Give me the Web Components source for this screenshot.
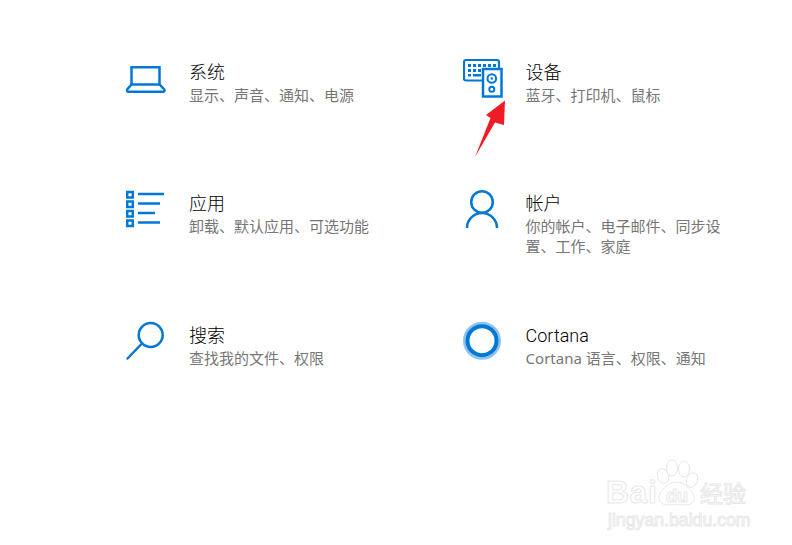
<!DOCTYPE html>
<html lang="zh">
<head>
<meta charset="utf-8">
<title>设置</title>
<style>
html, body { margin: 0; background: #fff; }
body { font-family: "Noto Sans", "Noto Sans CJK SC", sans-serif; }
svg { display: block; }
</style>
</head>
<body>
<settings-page>
  <settings-item>
    <svg slot="icon" width="40" height="40" viewBox="0 0 40 40" fill="none" stroke="#0078d7" stroke-width="2.500"><path d="M5.500 26V9.200h28V26"/><path d="M5.500 26.500h28l4.800 5q.8 2-1 2.200H2.200q-1.800-.2-1-2.200z"/></svg>
    <span slot="name">系统</span>
    <span slot="desc">显示、声音、通知、电源</span>
  </settings-item>
  <settings-item>
    <svg slot="icon" width="40" height="40" viewBox="0 0 40 40" fill="none" stroke="#0078d7" stroke-width="2">
      <path d="M19 22.500H3q-2 0-2-2V4q0-2 2-2h31q2 0 2 2v6" stroke-width="2.200"/>
      <path fill="#0078d7" stroke="none" d="M5 6h3v3H5zM10 6h3v3h-3zM15 6h3v3h-3zM20 6h3v3h-3zM25 6h3v3h-3zM30 6h3v3h-3zM5 11h3v3H5zM10 11h3v3h-3zM15 11h3v3h-3zM5 16h3v2.500H5zM10 16h8v2.500h-8z"/>
      <rect x="20" y="11" width="18.500" height="27.500" fill="#fff" stroke-width="2.500"/>
      <circle cx="28.800" cy="20.500" r="4.300"/><circle cx="28.800" cy="20.500" r="1.200" fill="#0078d7" stroke="none"/>
      <circle cx="28.800" cy="31.200" r="2.500"/>
    </svg>
    <span slot="name">设备</span>
    <span slot="desc">蓝牙、打印机、鼠标</span>
  </settings-item>
  <settings-item>
    <svg slot="icon" width="40" height="40" viewBox="0 0 40 40" fill="none" stroke="#0078d7" stroke-width="2.500"><path d="M1.200 3h5.600v5.500H1.200zM1.200 12.600h5.600v5.500H1.200zM1.200 22h5.600v5.500H1.200zM1.200 31.500h5.600V37H1.200z"/><path d="M12 5h26M12 14.500h22M12 24h17M12 33.500h22"/></svg>
    <span slot="name">应用</span>
    <span slot="desc">卸载、默认应用、可选功能</span>
  </settings-item>
  <settings-item>
    <svg slot="icon" width="40" height="40" viewBox="0 0 40 40" fill="none" stroke="#0078d7" stroke-width="2.500"><circle cx="19" cy="13" r="10.800"/><path d="M4 39a15 15 0 0 1 30 0"/></svg>
    <span slot="name">帐户</span>
    <span slot="desc">你的帐户、电子邮件、同步设置、工作、家庭</span>
  </settings-item>
  <settings-item>
    <svg slot="icon" width="40" height="40" viewBox="0 0 40 40" fill="none" stroke="#0078d7" stroke-width="2.500"><circle cx="24.700" cy="14" r="12"/><path d="M15 23.500L1.500 37.500" stroke-linecap="round"/></svg>
    <span slot="name">搜索</span>
    <span slot="desc">查找我的文件、权限</span>
  </settings-item>
  <settings-item>
    <svg slot="icon" width="40" height="40" viewBox="0 0 40 40" fill="none"><circle cx="19" cy="19.700" r="17.500" stroke="#8fc3ec" stroke-width="3"/><circle cx="19" cy="19.700" r="14.500" stroke="#0078d7" stroke-width="4"/></svg>
    <span slot="name">Cortana</span>
    <span slot="desc">Cortana 语言、权限、通知</span>
  </settings-item>
</settings-page>
<red-arrow></red-arrow>
<jy-watermark></jy-watermark>

<script>
class SettingsPage extends HTMLElement {
  constructor () {
    super()
    this.attachShadow({ mode: 'open' }).innerHTML = `
      <style>
        :host { display: grid; grid-template-columns: 336.6px 270px; grid-template-rows: 131px 132px 100px; padding: 58px 0 0 126px; }
      </style>
      <slot></slot>`
  }
}
customElements.define('settings-page', SettingsPage)

class SettingsItem extends HTMLElement {
  constructor () {
    super()
    this.attachShadow({ mode: 'open' }).innerHTML = `
      <style>
        :host { display: flex; align-items: flex-start; }
        #icon { flex: 0 0 63px; }
        #name { font-family: Roboto, "Noto Sans CJK SC", sans-serif; font-weight: 300; font-size: 18px; line-height: 28px; padding-top: 1px; color: #000; }
        #desc { font-size: 15px; line-height: 20px; margin-top: -2px; color: #767676; width: 200px; }
      </style>
      <div id="icon"><slot name="icon"></slot></div>
      <div>
        <div id="name"><slot name="name"></slot></div>
        <div id="desc"><slot name="desc"></slot></div>
      </div>`
  }
}
customElements.define('settings-item', SettingsItem)

class RedArrow extends HTMLElement {
  constructor () {
    super()
    this.attachShadow({ mode: 'open' }).innerHTML = `
      <style>
        :host { position: absolute; left: 470px; top: 95px; display: block; }
        svg { display: block; }
      </style>
      <svg width="40" height="66" viewBox="470 95 40 66"><path d="M505 100.500L486 115L490.500 118L475 157L495 122.500L504 125z" fill="#ee1c25"/></svg>`
  }
}
customElements.define('red-arrow', RedArrow)

class JyWatermark extends HTMLElement {
  constructor () {
    super()
    this.attachShadow({ mode: 'open' }).innerHTML = `
      <style>
        :host { position: absolute; left: 606px; top: 458px; display: block; width: 150px; color: #fff; -webkit-text-stroke: 1px #e8e8e8; font-family: "Liberation Sans", "Noto Sans CJK SC", sans-serif; }
        #top { display: flex; align-items: flex-end; height: 50px; }
        #bai { font-size: 32px; line-height: 32px; font-weight: bold; width: 49px; letter-spacing: 0.500px; }
        #jy { font-size: 23px; line-height: 28px; white-space: nowrap; }
        #url { font-size: 17.7px; line-height: 22px; margin-top: 1px; margin-left: 2px; white-space: nowrap; }
        svg { display: block; flex: none; }
        text { font-size: 18px; font-weight: bold; }
      </style>
      <div id="top">
        <span id="bai">Bai</span>
        <svg width="45" height="50" viewBox="0 0 45 50" fill="#fff" stroke="#e8e8e8" stroke-width="1">
          <ellipse cx="8" cy="18" rx="5.500" ry="7.500" transform="rotate(-20 8 18)"/>
          <ellipse cx="17" cy="10" rx="5.500" ry="8"/>
          <ellipse cx="29" cy="11" rx="5.500" ry="8"/>
          <ellipse cx="37" cy="22" rx="5.500" ry="7.500" transform="rotate(20 37 22)"/>
          <path d="M22 24c7 0 10 5 15 10 5 6 2 13-6 13-6 0-12-1-18 0-8 0-11-6-8-12 4-5 9-11 17-11z"/>
          <text x="22" y="44" text-anchor="middle">du</text>
        </svg>
        <span id="jy">经验</span>
      </div>
      <div id="url">jingyan.baidu.com</div>`
  }
}
customElements.define('jy-watermark', JyWatermark)
</script>
</body>
</html>
